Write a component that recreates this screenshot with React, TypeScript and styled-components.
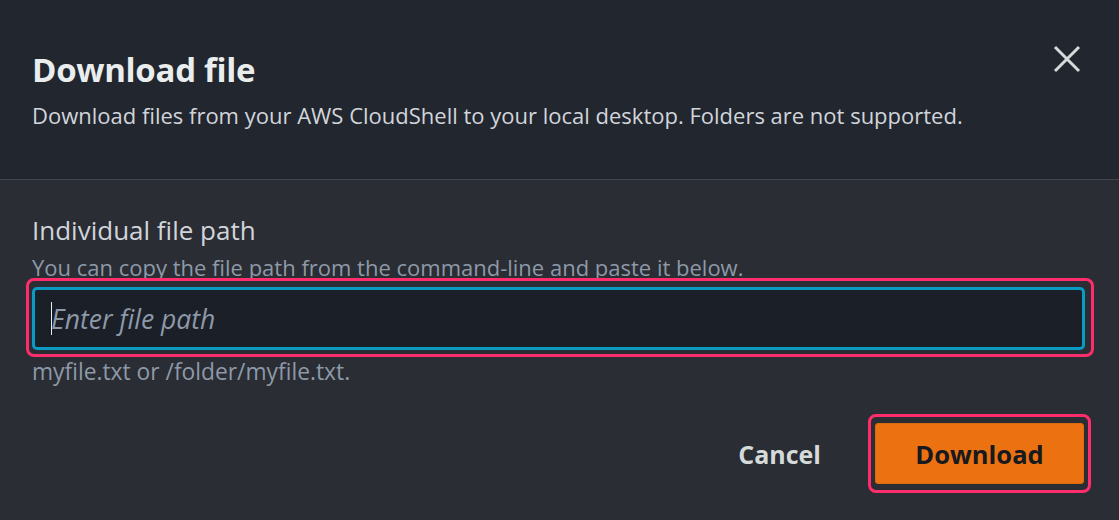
import React from 'react'
import styled, { createGlobalStyle } from 'styled-components'

const GlobalStyle = createGlobalStyle`
  html, body {
    margin: 0;
    padding: 0;
    background: #2a2d33;
  }
  body {
    font-family: 'Open Sans', 'Noto Sans', 'Liberation Sans', sans-serif;
  }
  * {
    box-sizing: border-box;
  }
`

const Modal = styled.div`
  display: flex;
  flex-direction: column;
  width: 1119px;
  height: 520px;
  background: #2a2d33;
  overflow: hidden;
`

const Header = styled.header`
  height: 180px;
  padding: 49px 34px 0 32px;
  background: #22262e;
  border-bottom: 1px solid #414650;
`

const TitleRow = styled.div`
  display: flex;
  justify-content: space-between;
  align-items: flex-start;
`

const Title = styled.h1`
  margin: 0;
  font-size: 33px;
  line-height: 42px;
  font-weight: 700;
  letter-spacing: -0.3px;
  color: #eaeded;
`

const CloseButton = styled.button`
  display: flex;
  margin: -4px 4px 0 0;
  padding: 0;
  border: none;
  background: none;
  color: #d5dbdb;
  cursor: pointer;
`

const Description = styled.p`
  margin: 9px 0 0;
  font-size: 22px;
  line-height: 30px;
  color: #d1d5db;
`

const Body = styled.section`
  display: flex;
  flex-direction: column;
  padding: 35px 34px 0 32px;
`

const Label = styled.label`
  font-size: 26px;
  line-height: 30px;
  font-weight: 500;
  color: #d1d5db;
`

const Hint = styled.div<{ $gap?: number; $size?: number }>`
  margin-top: ${({ $gap }) => $gap ?? 0}px;
  font-size: ${({ $size }) => $size ?? 22}px;
  line-height: 24px;
  color: #8d99a8;
`

const Highlight = styled.div<{ $pad: string; $offset: string }>`
  align-self: ${({ $offset }) => ($offset === 'end' ? 'flex-end' : 'stretch')};
  margin: ${({ $offset }) => ($offset === 'end' ? '0 -6px 0 0' : '-1px -9px 0 -6px')};
  padding: ${({ $pad }) => $pad};
  border: 3px solid #ff2d6b;
  border-radius: 8px;
`

const Field = styled.div`
  position: relative;
`

const Input = styled.input`
  display: block;
  width: 100%;
  height: 63px;
  padding: 0 16px;
  border: 3px solid #0a9ac2;
  border-radius: 5px;
  background: #1b1f27;
  color: #d1d5db;
  font-family: inherit;
  font-size: 26.5px;
  font-style: italic;
  outline: none;
  caret-color: transparent;

  &::placeholder {
    color: #8d99a8;
    font-style: italic;
  }
`

const Caret = styled.span`
  position: absolute;
  left: 19px;
  top: 15px;
  width: 1px;
  height: 33px;
  background: #eaeded;
`

const Footer = styled.div`
  display: flex;
  justify-content: flex-end;
  align-items: center;
  margin-top: 30px;
`

const LinkButton = styled.button`
  margin-right: 47px;
  padding: 0;
  border: none;
  background: none;
  font-family: inherit;
  font-size: 25px;
  font-weight: 700;
  color: #d5dbdb;
  cursor: pointer;
`

const PrimaryButton = styled.button`
  display: block;
  width: 209px;
  height: 61px;
  border: 1px solid #dc6a0f;
  border-radius: 3px;
  background: #ec7211;
  font-family: inherit;
  font-size: 25.5px;
  font-weight: 700;
  color: #16191f;
  cursor: pointer;
`

const CloseIcon = () => (
  <svg width='28' height='28' viewBox='0 0 28 28' fill='none'>
    <path d='M2 2L26 26M26 2L2 26' stroke='currentColor' strokeWidth='3' />
  </svg>
)

const App = () => {
  return (
    <>
      <GlobalStyle />
      <Modal>
        <Header>
          <TitleRow>
            <Title>Download file</Title>
            <CloseButton aria-label='Close'>
              <CloseIcon />
            </CloseButton>
          </TitleRow>
          <Description>
            Download files from your AWS CloudShell to your local desktop. Folders are not supported.
          </Description>
        </Header>
        <Body>
          <Label htmlFor='file-path'>Individual file path</Label>
          <Hint $gap={10}>You can copy the file path from the command-line and paste it below.</Hint>
          <Highlight $pad='6px 6px 4px 3px' $offset='stretch'>
            <Field>
              <Input id='file-path' type='text' placeholder='Enter file path' />
              <Caret />
            </Field>
          </Highlight>
          <Hint $gap={3} $size={22.8}>myfile.txt or /folder/myfile.txt.</Hint>
          <Footer>
            <LinkButton>Cancel</LinkButton>
            <Highlight $pad='6px 4px' $offset='end'>
              <PrimaryButton>Download</PrimaryButton>
            </Highlight>
          </Footer>
        </Body>
      </Modal>
    </>
  )
}

export default App
